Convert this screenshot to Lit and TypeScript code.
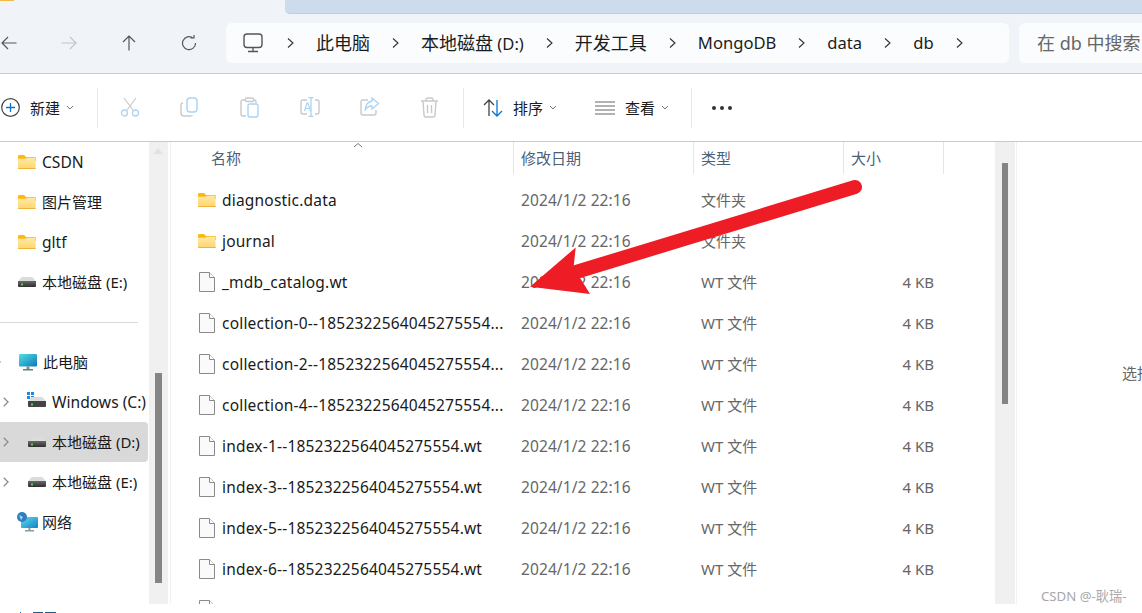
import { LitElement, html, css, svg } from "lit";
import { customElement } from "lit/decorators.js";

const folder = html`<svg class="ic-folder" width="18" height="14" viewBox="0 0 18 14"><path d="M0 1.2Q0 0 1.2 0H6l2 2h8.8Q18 2 18 3.2V6H0Z" fill="#fdb913"/><path d="M0 3.8h7.5l1.6-1h7.7q.7 0 .7.8v9.2q0 1.2-1.2 1.2H1.2Q0 14 0 12.8Z" fill="url(#fg)"/><path d="M0 13h18v.2q0 .8-1.2.8H1.2Q0 14 0 13.2Z" fill="#efb33a"/><defs><linearGradient id="fg" x1="0" x2="0" y1="0" y2="1"><stop offset="0" stop-color="#ffe9a6"/><stop offset="1" stop-color="#ffd56e"/></linearGradient></defs></svg>`;
const file = html`<svg width="16" height="20" viewBox="0 0 16 20"><path d="M.5.5h10l5 5v14H.5Z" fill="#fafafa" stroke="#8a8a8a"/><path d="M10.5.5v5h5" fill="#fff" stroke="#8a8a8a"/></svg>`;
const drive = html`<svg width="18" height="10" viewBox="0 0 18 10"><path d="M3.5 0h11L18 4.500H0Z" fill="#dcdcdc"/><path d="M0 4h18v5q0 1-1 1H1q-1 0-1-1Z" fill="url(#dg)"/><rect x="3" y="6.500" width="2" height="2" fill="#45d85a"/><defs><linearGradient id="dg" x1="0" x2="0" y1="0" y2="1"><stop offset="0" stop-color="#6a6a6a"/><stop offset="1" stop-color="#2e2e2e"/></linearGradient></defs></svg>`;
const winDrive = html`<svg width="20" height="20" viewBox="0 0 20 20"><g fill="#1a8ae6"><rect x="0" y="0" width="3" height="3"/><rect x="4" y="0" width="3" height="3"/><rect x="0" y="4" width="3" height="3"/><rect x="4" y="4" width="3" height="3"/></g><g transform="translate(1 5)"><path d="M3.5 0h11L18 4.500H0Z" fill="#dcdcdc"/><path d="M0 4h18v5q0 1-1 1H1q-1 0-1-1Z" fill="#444"/><rect x="3" y="6.500" width="2" height="2" fill="#45d85a"/></g></svg>`;
const pc = html`<svg width="18" height="17" viewBox="0 0 18 17"><rect width="18" height="12.500" rx="1" fill="url(#pg)"/><rect x="7.500" y="12.500" width="3" height="2.500" fill="#7a8f98"/><rect x="4" y="15" width="10" height="1.500" fill="#6d7a80"/><defs><linearGradient id="pg" x1="0" x2="1" y1="0" y2="1"><stop offset="0" stop-color="#4fe0e6"/><stop offset="1" stop-color="#0f78b8"/></linearGradient></defs></svg>`;
const net = html`<svg width="21" height="20" viewBox="0 0 21 20"><rect x="4" y="5" width="17" height="11" rx="1" fill="url(#ng)"/><rect x="11.500" y="16" width="2" height="2" fill="#8a9aa2"/><rect x="8" y="18" width="9" height="1.500" fill="#8a9aa2"/><circle cx="5" cy="5" r="5" fill="#2f7fc0"/><path d="M2 3 6 5 4 8Z" fill="#a8d8f2"/><defs><linearGradient id="ng" x1="0" x2="1" y1="0" y2="1"><stop offset="0" stop-color="#5fdcea"/><stop offset="1" stop-color="#1282c4"/></linearGradient></defs></svg>`;
const chev = html`<svg class="chev" width="7" height="12" viewBox="0 0 7 12"><path d="M1 1.500 6 6l-5 4.500" fill="none" stroke="#333" stroke-width="1.100"/></svg>`;
const side = html`<svg width="6" height="10" viewBox="0 0 6 10"><path d="M.8.800 5 5 .8 9.200" fill="none" stroke="#8c8c8c" stroke-width="1.300"/></svg>`;
const down = html`<svg class="dn" width="8" height="5" viewBox="0 0 8 5"><path d="M1 1l3 3 3-3" fill="none" stroke="#777" stroke-width="1"/></svg>`;

const arrow = (d: string, c: string) => html`<svg width="16" height="16" viewBox="0 0 16 16"><path d="${d}" fill="none" stroke="${c}" stroke-width="1.200"/></svg>`;

const G = "#c9c9c9";
const B = "#a9d4f5";
const tools = [
  svg`<path d="M4 1l9 12M16 1 7 13" stroke="${G}" fill="none" stroke-width="1.200"/><circle cx="4.500" cy="16" r="3" fill="none" stroke="${B}" stroke-width="1.300"/><circle cx="15.500" cy="16" r="3" fill="none" stroke="${B}" stroke-width="1.300"/>`,
  svg`<path d="M3 6Q1 6 1 8v8q0 3 3 3h6q2 0 2.500-1" fill="none" stroke="${G}" stroke-width="1.400"/><rect x="7" y="1" width="10" height="14" rx="3" fill="none" stroke="${B}" stroke-width="1.400"/>`,
  svg`<path d="M5 3H3Q1 3 1 5v12q0 2 2 2h3M13 3h1q2 0 2 2v1" fill="none" stroke="${G}" stroke-width="1.400"/><rect x="5.500" y="1" width="8" height="3.500" rx="1" fill="none" stroke="${G}" stroke-width="1.300"/><rect x="8" y="7" width="10" height="13" rx="2" fill="none" stroke="${B}" stroke-width="1.400"/>`,
  svg`<path d="M7 3H3Q1 3 1 5v10q0 2 2 2h4M15 3h2q2 0 2 2v10q0 2-2 2h-2" fill="none" stroke="${G}" stroke-width="1.400"/><path d="M11 0v20M8.500 .7h5M8.500 19.300h5" fill="none" stroke="${B}" stroke-width="1.300"/><path d="M4.500 14 7 6h1l2.500 8M5.500 11.500h4" fill="none" stroke="${B}" stroke-width="1.200"/>`,
  svg`<path d="M8 3H3Q1 3 1 5v11q0 2 2 2h11q2 0 2-2v-3" fill="none" stroke="${G}" stroke-width="1.400"/><path d="M12 1l6.500 5.500L12 12V9Q7 9 5 13.500 5.500 5 12 4Z" fill="none" stroke="${B}" stroke-width="1.300"/>`,
  svg`<path d="M1 4h17M6 4V2.500Q6 1 7.500 1h4Q13 1 13 2.500V4M3 4l1 14q0 2 2 2h7q2 0 2-2l1-14M7.500 8v8M11.500 8v8" fill="none" stroke="${G}" stroke-width="1.400"/>`,
];

type Row = [string, string, string, string, any];
const W = "WT 文件";
const D = "2024/1/2 22:16";
const rows: Row[] = [
  ["diagnostic.data", D, "文件夹", "", folder],
  ["journal", D, "文件夹", "", folder],
  ["_mdb_catalog.wt", D, W, "4 KB", file],
  ["collection-0--1852322564045275554...", D, W, "4 KB", file],
  ["collection-2--1852322564045275554...", D, W, "4 KB", file],
  ["collection-4--1852322564045275554...", D, W, "4 KB", file],
  ["index-1--1852322564045275554.wt", D, W, "4 KB", file],
  ["index-3--1852322564045275554.wt", D, W, "4 KB", file],
  ["index-5--1852322564045275554.wt", D, W, "4 KB", file],
  ["index-6--1852322564045275554.wt", D, W, "4 KB", file],
  ["", "", "", "", file],
];

@customElement("app-root")
export class AppRoot extends LitElement {
  static styles = css`
    :host {
      display: block;
      width: 1142px;
      height: 613px;
      overflow: hidden;
      position: relative;
      background: #fff;
      font-family: "Noto Sans", "Noto Sans CJK SC", sans-serif;
      color: #1a1a1a;
    }
    svg { display: block; flex: none; }
    .top { height: 14px; background: #f0f4f9; display: flex; position: relative; }
    .flag { width: 14px; height: 1px; background: #f5b942; }
    .tab { margin-left: 271px; flex: 1; background: #cddcec; border-bottom: 1px solid #bfcfe0; border-bottom-left-radius: 5px; }
    .nav {
      background: #f0f4f9; border-bottom: 1px solid #c6ccd3;
      display: flex; align-items: flex-start; padding-top: 9px; height: 50px;
    }
    .navbtns { display: flex; gap: 44px; width: 226px; padding: 12px 0 0 1px; box-sizing: border-box; }
    .crumb {
      width: 783px; height: 40px; background: #fbfcfe; border-radius: 6px; display: flex; align-items: center;
      padding-left: 17px; box-sizing: border-box; font-size: 18px; line-height: 40px; color: #1c1c1c;
    }
    .crumb .chev { margin: 0 22px; }
    .crumb .chev.first { margin-left: 24px; }
    .crumb span { white-space: nowrap; }
    .crumb .lat { font-size: 16.600px; }
    .search {
      margin-left: 10px; flex: 1; height: 40px; background: #fbfcfe; border-radius: 6px 0 0 6px;
      padding-left: 18px; font-size: 18px; line-height: 40px; color: #666; white-space: nowrap; overflow: hidden;
    }
    .toolbar {
      height: 67px; border-bottom: 1px solid #c6ccd3; display: flex; align-items: center; font-size: 15px; color: #1c1c1c;
      padding-left: 1px;
    }
    .t { white-space: nowrap; line-height: 20px; }
    .sep { width: 1px; height: 40px; background: #e8e8e8; flex: none; }
    .new { display: flex; align-items: center; width: 96px; }
    .new .t { margin-left: 10px; }
    .dn { margin-left: 6px; }
    .tools { display: flex; gap: 40px; width: 365px; padding-left: 22px; box-sizing: border-box; }
    .sort { display: flex; align-items: center; width: 131px; padding-left: 19px; box-sizing: border-box; }
    .sort .t { margin-left: 10px; }
    .view { display: flex; align-items: center; width: 96px; }
    .view .t { margin-left: 10px; }
    .dots { display: flex; gap: 4px; margin-left: 20px; }
    .dots i { width: 4px; height: 4px; border-radius: 50%; background: #333; display: block; }
    .body { height: 462px; display: flex; }
    .sidebar { width: 149px; flex: none; font-size: 15px; color: #1a1a1a; overflow: hidden; }
    .sr { height: 40px; display: flex; align-items: center; white-space: nowrap; box-sizing: border-box; }
    .sr .t { margin-left: 6px; }
    .sr .lat { font-size: 15.600px; }
    .pin { padding-left: 18px; }
    .dr { padding-left: 3px; }
    .dr .box { margin-left: 19px; display: block; }
    .dr .t { margin-left: 6px; }
    .sr.sel { background: #d9d9d9; border-radius: 0 4px 4px 0; margin-right: 1px; }
    .win .box { margin-left: 18px; }
    .win .t { margin-left: 5px; }
    .pc { padding-left: 0; }
    .pc > svg:first-child { margin: 0 18px 0 -5px; }
    .netr { padding-left: 17px; }
    .netr .t { margin-left: 4px; }
    .divider { height: 40px; display: flex; align-items: center; }
    .divider i { display: block; width: 138px; height: 1px; background: #d9d9d9; }
    .sb { background: #f0f0f0; flex: none; position: relative; }
    .sb1 { width: 19px; }
    .sb1 .thumb { width: 7px; height: 210px; margin: 231px 0 0 6px; background: #858585; }
    .up { position: absolute; left: 4px; top: 6px; width: 0; height: 0; border: 5px solid transparent; border-bottom: 6px solid #e2e2e2; border-top: 0; }
    .gap { width: 2px; flex: none; }
    .hair { width: 1px; background: #f2f2f2; flex: none; }
    .main { width: 824px; flex: none; overflow: hidden; }
    .head { display: grid; grid-template-columns: 342px 180px 150px 100px 1px; height: 32px; margin-bottom: 5px; font-size: 15px; color: #4c607a; position: relative; }
    .head div { box-sizing: border-box; padding-left: 7px; line-height: 32px; white-space: nowrap; border-left: 1px solid #e5e5e5; }
    .head div:first-child { padding-left: 40px; border-left: 0; }
    .head div:last-child { padding: 0; }
    .caret { position: absolute; left: 182px; top: 0; }
    .fr { display: grid; grid-template-columns: 24px 299px 180px 150px 83px; height: 41px; align-items: center; padding-left: 27px; font-size: 15px; white-space: nowrap; }
    .fr .nm { color: #1a1a1a; font-size: 15.500px; letter-spacing: .2px; }
    .fr .mt { color: #666; }
    .fr .dt { color: #666; font-size: 15.500px; letter-spacing: .1px; }
    .fr .sz { color: #666; text-align: right; }
    .fr .icf { margin-left: 1px; }
    .sb2 { width: 20px; }
    .sb2 .thumb { width: 6px; height: 241px; margin: 21px 0 0 7px; background: #858585; }
    .line2 { width: 1px; background: #fff; flex: none; }
    .pane { flex: 1; overflow: hidden; padding: 220px 0 0 105px; font-size: 15px; line-height: 22px; color: #666; white-space: nowrap; }
    .status { display: flex; height: 9px; align-items: flex-end; }
    .status i { display: block; height: 1px; background: #1f5c8a; width: 10px; margin-left: 2px; }
    .status i:first-child { width: 1px; margin-left: 20px; }
    .status i:nth-child(2) { margin-left: 12px; }
    .status i:last-child { width: 11px; }
    .overlay { position: absolute; left: 0; top: 0; pointer-events: none; }
    .mark { position: absolute; left: 1041px; top: 587px; font-size: 13.200px; line-height: 18px; color: #a8a8a8; white-space: nowrap; }
  `;

  render() {
    return html`
      <div class="top"><div class="flag"></div><div class="tab"></div></div>
      <div class="nav">
        <div class="navbtns">
          ${arrow("M15.500 8H1M7 2 1 8l6 6", "#555")}
          ${arrow("M.5 8H15M9 2l6 6-6 6", "#c4c4c4")}
          ${arrow("M8 15.500V1M2 7l6-6 6 6", "#555")}
          ${arrow("M14.500 8A6.500 6.500 0 1 1 12 3M9.500 3H13V-.5", "#555")}
        </div>
        <div class="crumb">
          <svg width="20" height="20" viewBox="0 0 20 20"><rect x="1" y="1" width="18" height="13.500" rx="3" fill="none" stroke="#555" stroke-width="1.400"/><path d="M10 15v3M5 18.500h10" stroke="#555" stroke-width="1.300" fill="none"/></svg>
          <svg class="chev first" width="7" height="12" viewBox="0 0 7 12"><path d="M1 1.500 6 6l-5 4.500" fill="none" stroke="#333" stroke-width="1.100"/></svg>
          <span>此电脑</span>${chev}
          <span>本地磁盘<span class="lat"> (D:)</span></span>${chev}
          <span>开发工具</span>${chev}
          <span class="lat">MongoDB</span>${chev}
          <span class="lat">data</span>${chev}
          <span class="lat">db</span>${chev}
        </div>
        <div class="search">在 db 中搜索</div>
      </div>
      <div class="toolbar">
        <div class="new">
          <svg width="19" height="19" viewBox="0 0 19 19"><circle cx="9.500" cy="9.500" r="8.800" fill="none" stroke="#444" stroke-width="1.200"/><path d="M9.500 5v9M5 9.500h9" stroke="#0a74d0" stroke-width="1.300"/></svg>
          <span class="t">新建</span>${down}
        </div>
        <div class="sep"></div>
        <div class="tools">
          ${tools.map((t) => html`<svg width="20" height="21" viewBox="0 0 20 21">${t}</svg>`)}
        </div>
        <div class="sep"></div>
        <div class="sort">
          <svg width="20" height="20" viewBox="0 0 20 20"><path d="M6 18V2M1 7l5-5 5 5" fill="none" stroke="#444" stroke-width="1.300"/><path d="M14 2v16M9 13l5 5 5-5" fill="none" stroke="#0a74d0" stroke-width="1.300"/></svg>
          <span class="t">排序</span>${down}
        </div>
        <div class="view">
          <svg width="20" height="14" viewBox="0 0 20 14"><path d="M0 1h20M0 5h20M0 9h20M0 13h20" stroke="#666" stroke-width="1.100"/></svg>
          <span class="t">查看</span>${down}
        </div>
        <div class="sep"></div>
        <div class="dots"><i></i><i></i><i></i></div>
      </div>
      <div class="body">
        <div class="sidebar">
          <div class="sr pin">${folder}<span class="t lat">CSDN</span></div>
          <div class="sr pin">${folder}<span class="t">图片管理</span></div>
          <div class="sr pin">${folder}<span class="t lat">gltf</span></div>
          <div class="sr pin">${drive}<span class="t">本地磁盘 (E:)</span></div>
          <div class="divider"><i></i></div>
          <div class="sr pc">${side}${pc}<span class="t">此电脑</span></div>
          <div class="sr dr win">${side}<span class="box">${winDrive}</span><span class="t lat">Windows (C:)</span></div>
          <div class="sr dr sel">${side}<span class="box">${drive}</span><span class="t">本地磁盘 (D:)</span></div>
          <div class="sr dr">${side}<span class="box">${drive}</span><span class="t">本地磁盘 (E:)</span></div>
          <div class="sr netr">${net}<span class="t">网络</span></div>
        </div>
        <div class="sb sb1"><div class="up"></div><div class="thumb"></div></div>
        <div class="gap"></div>
        <div class="hair"></div>
        <div class="main">
          <div class="head">
            <div>名称</div><div>修改日期</div><div>类型</div><div>大小</div><div></div>
            <svg class="caret" width="10" height="6" viewBox="0 0 10 6"><path d="M1 5l4-3.500L9 5" fill="none" stroke="#777"/></svg>
          </div>
          ${rows.map(
            (r) => html`<div class="fr">
              <div class="${r[4] === file ? "icf" : ""}">${r[4]}</div>
              <div class="nm">${r[0]}</div>
              <div class="dt">${r[1]}</div>
              <div class="mt">${r[2]}</div>
              <div class="sz">${r[3]}</div>
            </div>`,
          )}
        </div>
        <div class="sb sb2"><div class="thumb"></div></div>
        <div class="line2"></div>
        <div class="hair"></div>
        <div class="pane">选择要预览的文件。</div>
      </div>
      <div class="status"><i></i><i></i><i></i></div>
      <svg class="overlay" width="1142" height="613" viewBox="0 0 1142 613">
        <path d="M855 187 576 272" stroke="#ee1c25" stroke-width="14" stroke-linecap="round" fill="none"/>
        <path d="M530 286.700 575.700 247.500 573.500 268 582 281 590 294Z" fill="#ee1c25"/>
      </svg>
      <div class="mark">CSDN @-耿瑞-</div>
    `;
  }
}
